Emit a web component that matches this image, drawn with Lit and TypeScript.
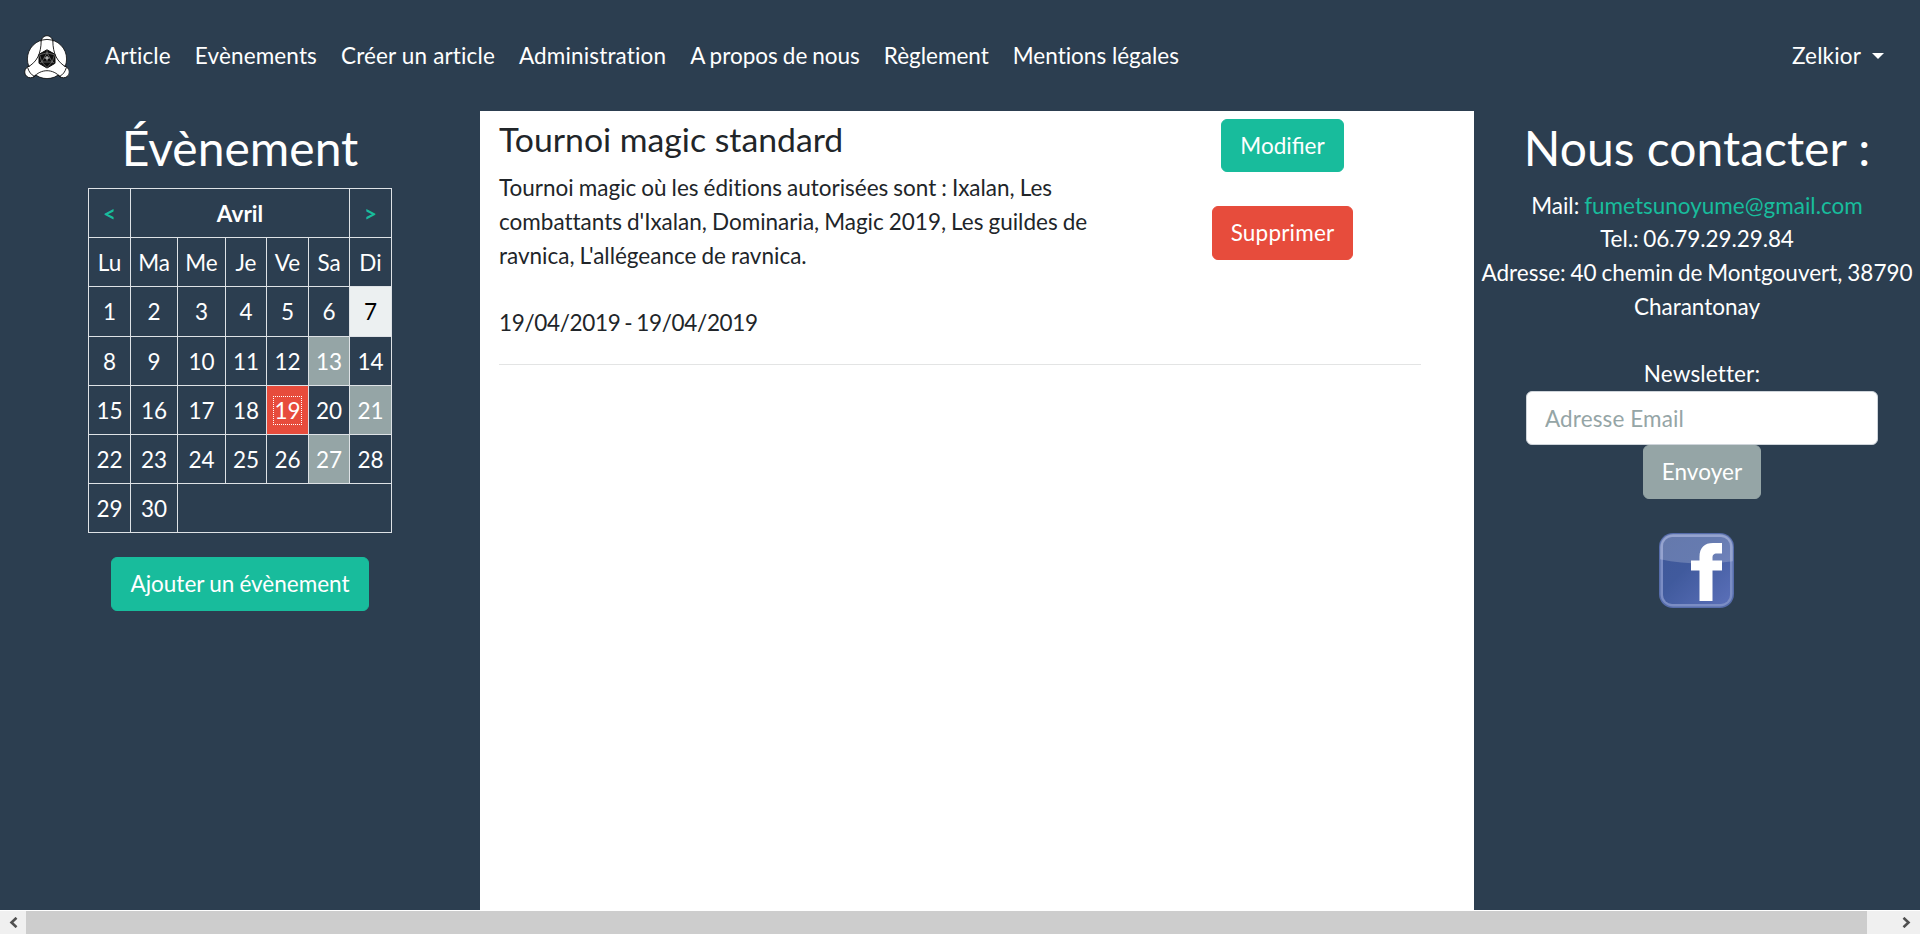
import { LitElement, html, css, svg } from "lit";
import { customElement } from "lit/decorators.js";
import { classMap } from "lit/directives/class-map.js";

const NAV = [
  { label: "Article", fit: "open" },
  { label: "Evènements", fit: "open" },
  { label: "Créer un article", fit: "open" },
  { label: "Administration", fit: "open" },
  { label: "A propos de nous", fit: "tight" },
  { label: "Règlement", fit: "" },
  { label: "Mentions légales", fit: "" },
];
const WEEKDAYS = ["Lu", "Ma", "Me", "Je", "Ve", "Sa", "Di"];
const TODAY = 7;
const SELECTED = 19;
const BUSY = [13, 21, 27];

const logo = svg`
  <svg class="logo" viewBox="0 0 45 45">
    <circle cx="23" cy="24" r="19.600" fill="#fff" stroke="#0d0d0d" stroke-width=".8" />
    <g fill="#fff" stroke="#0d0d0d" stroke-width=".9">
      <circle cx="6.500" cy="37" r="5.800" />
      <circle cx="39.500" cy="37" r="5.800" />
      <path d="M17.200 7C17.500 -1.400 28.500 -1.400 28.800 7" />
    </g>
    <path d="M17.200 6H28.800C29 19 32 26 41 32L38 39L33 40Q23 30 13 40L8 39L5 32C14 26 17 19 17.200 6Z" fill="#fff" />
    <path d="M17.200 5.500C17 19 13 27 3.500 32.200M28.800 5.500C29 19 33 27 42.500 32.200M9.500 42.300C17 33.500 29 33.500 36.500 42.300M17.200 5.200Q23 3.600 28.800 5.200M3.800 33C5 37 7 39.500 10.500 41.500M42.200 33C41 37 39 39.500 35.500 41.500" fill="none" stroke="#0d0d0d" stroke-width=".9" />
    <path d="M23 14.800L31 19.300V28.300L23 33L15 28.300V19.300Z" fill="#0b0b0b" stroke="#0b0b0b" />
    <path d="M23 17.800L28.200 27H17.800ZM23 15.300V17.800M28.200 27L30.400 28M17.800 27L15.600 28M15.500 19.800L23 17.800L30.500 19.800L28.200 27L23 32.500L17.800 27Z" fill="none" stroke="#aaa" stroke-width=".5" />
    <path d="M20.700 23H25.300M23 21V25.500" stroke="#eee" stroke-width=".9" />
  </svg>`;

const facebook = svg`
  <svg class="fb" viewBox="0 0 75 75">
    <defs>
      <linearGradient id="base" x1="0" y1="0" x2="1" y2="1">
        <stop offset="0" stop-color="#3f5898" /><stop offset=".4" stop-color="#405a9d" /><stop offset="1" stop-color="#5a6fb8" />
      </linearGradient>
      <clipPath id="inner"><rect x="1" y="1" width="73" height="73" rx="13" /></clipPath>
    </defs>
    <rect width="75" height="75" rx="14" fill="#566cab" />
    <rect x="1.500" y="1.500" width="72" height="72" rx="12.500" fill="#7b8dc4" />
    <rect x="4" y="4" width="67" height="67" rx="9" fill="url(#base)" />
    <path clip-path="url(#inner)" d="M0 0H75V28Q38 34 0 26Z" fill="#fff" fill-opacity=".2" />
    <path d="M40.500 68V37.500H32V27.500H40.500V24C40.500 14.500 45.500 10 54 10H63V20.500H58C54.500 20.500 53.500 22 53.500 25V27.500H63V37.500H53.500V68Z" fill="#fff" />
  </svg>`;

@customElement("app-root")
export class AppRoot extends LitElement {
  static styles = css`
    :host {
      display: flex;
      flex-direction: column;
      height: 934px;
      overflow: hidden;
      background: #2c3e50;
      color: #fff;
      font-family: Lato, sans-serif;
      font-size: 22.5px;
      font-variant-ligatures: none;
      line-height: 33.75px;
    }
    * { box-sizing: border-box; }
    nav { display: flex; align-items: center; flex: none; height: 111px; padding: 0 24px; }
    .logo { display: block; width: 45px; height: 45px; margin: 3px 24px 0 0; }
    .link { padding: 0 12px; white-space: nowrap; }
    .open { letter-spacing: .15px; }
    .tight { word-spacing: -.8px; }
    .user { display: flex; align-items: center; margin-left: auto; letter-spacing: .15px; }
    .caret { margin-left: 11px; border: 6px solid transparent; border-top-color: #fff; border-bottom: 0; }
    main { display: grid; grid-template-columns: 480px 994px 446px; flex: 1; min-height: 0; }
    aside { display: flex; flex-direction: column; align-items: center; padding-top: 8px; text-align: center; }
    h1 { margin: 0 0 11px; font-size: 48px; font-weight: 400; line-height: 58px; }
    .calendar {
      display: grid;
      grid-template-columns: 42px 47px 48px 41px 42px 41px 43px;
      grid-template-rows: 49px 49px 50px 49px 49px 49px 50px;
      margin-bottom: 24px;
    }
    .cell {
      display: flex;
      align-items: center;
      justify-content: center;
      padding-top: 1px;
      border: solid #dee2e6;
      border-width: 1px 0 0 1px;
    }
    .last { border-right-width: 1px; }
    .bottom { border-bottom-width: 1px; }
    .month { grid-column: span 5; font-weight: 700; }
    .rest { grid-column: span 5; }
    .arrow { color: #18bc9c; font-weight: 700; }
    .today { background: #ecf0f1; color: #000; }
    .busy { background: #95a5a6; }
    .selected { background: #e74c3c; }
    .focus { outline: 1px dotted #fff; line-height: 27px; }
    .btn {
      height: 53.75px;
      padding: 9px 18px;
      border: 1px solid;
      border-radius: 6px;
      color: #fff;
      font: inherit;
      font-variant-ligatures: normal;
      white-space: nowrap;
    }
    .green { background: #18bc9c; border-color: #18bc9c; word-spacing: -.6px; }
    .red { background: #e74c3c; border-color: #e74c3c; letter-spacing: .2px; }
    .gray { background: #95a5a6; border-color: #95a5a6; letter-spacing: .1px; }
    .content { padding: 7.5px 53px 0 19px; background: #fff; color: #212529; }
    .event { display: grid; grid-template-columns: 645px 1fr; height: 246.5px; border-bottom: 1px solid #e3e4e4; }
    h3 { margin: 0 0 12.2px; font-size: 33.75px; font-weight: 400; line-height: 40.5px; }
    p { margin: 0; word-spacing: -.75px; }
    .date { margin-top: 33.75px; letter-spacing: -.33px; word-spacing: -1.5px; }
    .actions { display: flex; flex-direction: column; align-items: center; gap: 33.75px; }
    .contact { padding-top: .7px; word-spacing: -.9px; }
    .mail { color: #18bc9c; }
    .phone { letter-spacing: -.08px; }
    .news { margin: 33.55px 0 0 10px; display: flex; flex-direction: column; align-items: center; }
    .label { letter-spacing: .15px; }
    input {
      width: 352px;
      height: 53.75px;
      margin: 0 0 .25px;
      padding: 10px 18px 8px;
      border: 1px solid #ced4da;
      border-radius: 6px;
      background: #fff;
      font: inherit;
      letter-spacing: .12px;
    }
    input::placeholder { color: #95a5a6; opacity: 1; }
    .fb { width: 75px; height: 75px; margin: 34px 1px 0 0; }
    .scrollbar { display: flex; justify-content: space-between; flex: none; height: 24px; border-top: 1px solid #fff; background: #f0f0f0; }
    .thumb { flex: 1; background: #cdcdcd; }
    .step { display: flex; align-items: center; justify-content: center; width: 26px; }
    .right { width: 53px; padding-left: 26px; }
    .step svg { width: 9px; height: 11px; fill: none; stroke: #505050; stroke-width: 2.6; }
  `;

  private day(n: number) {
    const classes = {
      cell: true,
      last: n % 7 === 0,
      bottom: n > 28,
      today: n === TODAY,
      busy: BUSY.includes(n),
      selected: n === SELECTED,
    };
    return html`<div class=${classMap(classes)}><span class=${n === SELECTED ? "focus" : ""}>${n}</span></div>`;
  }

  render() {
    return html`
      <nav>
        ${logo}
        ${NAV.map(({ label, fit }) => html`<a class="link ${fit}">${label}</a>`)}
        <a class="link user">Zelkior<span class="caret"></span></a>
      </nav>
      <main>
        <aside>
          <h1>Évènement</h1>
          <div class="calendar">
            <div class="cell arrow">&lt;</div>
            <div class="cell month">Avril</div>
            <div class="cell arrow last">&gt;</div>
            ${WEEKDAYS.map((d, i) => html`<div class=${classMap({ cell: true, last: i === 6 })}>${d}</div>`)}
            ${Array.from({ length: 30 }, (_, i) => this.day(i + 1))}
            <div class="cell rest last bottom"></div>
          </div>
          <button class="btn green">Ajouter un évènement</button>
        </aside>
        <section class="content">
          <article class="event">
            <div>
              <h3>Tournoi magic standard</h3>
              <p>Tournoi magic où les éditions autorisées sont : Ixalan, Les combattants d'Ixalan, Dominaria, Magic 2019, Les guildes de ravnica, L'allégeance de ravnica.</p>
              <p class="date">19/04/2019 - 19/04/2019</p>
            </div>
            <div class="actions">
              <button class="btn green">Modifier</button>
              <button class="btn red">Supprimer</button>
            </div>
          </article>
        </section>
        <aside>
          <h1>Nous contacter :</h1>
          <div class="contact">
            Mail: <a class="mail">fumetsunoyume@gmail.com</a><br />
            <span class="phone">Tel.: 06.79.29.29.84</span><br />
            Adresse: 40 chemin de Montgouvert, 38790 Charantonay
          </div>
          <div class="news">
            <span class="label">Newsletter:</span>
            <input placeholder="Adresse Email" />
            <button class="btn gray">Envoyer</button>
          </div>
          ${facebook}
        </aside>
      </main>
      <div class="scrollbar">
        <div class="step"><svg viewBox="0 0 9 11"><path d="M7.500 .8L2.500 5.500L7.500 10.200" /></svg></div>
        <div class="thumb"></div>
        <div class="step right"><svg viewBox="0 0 9 11"><path d="M1.500 .8L6.500 5.500L1.500 10.200" /></svg></div>
      </div>
    `;
  }
}
